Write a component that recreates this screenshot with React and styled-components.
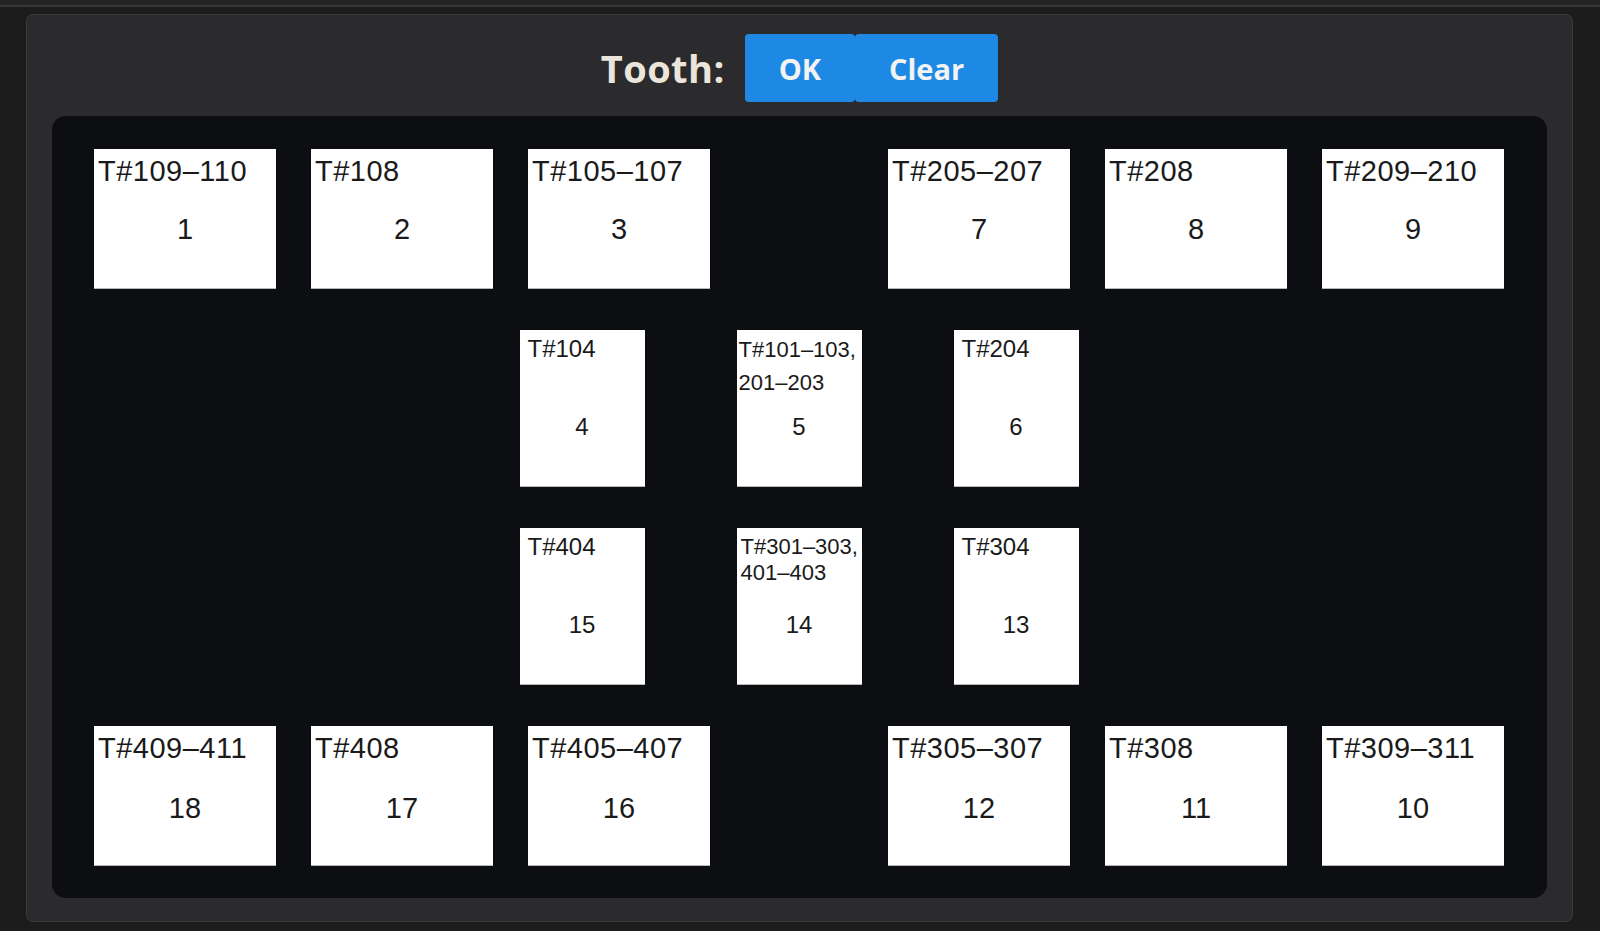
import React from 'react';
import styled, { createGlobalStyle } from 'styled-components';

const upperLeft = [
    { label: 'T#109\u2013110', num: 1 },
    { label: 'T#108', num: 2 },
    { label: 'T#105\u2013107', num: 3 },
]
const upperRight = [
    { label: 'T#205\u2013207', num: 7 },
    { label: 'T#208', num: 8 },
    { label: 'T#209\u2013210', num: 9 },
]
const upperMid = [
    { label: ['T#104'], num: 4 },
    { label: ['T#101\u2013103,', '201\u2013203'], num: 5, small: true, lh: 33, pt: 3, pl: 2 },
    { label: ['T#204'], num: 6 },
]
const lowerMid = [
    { label: ['T#404'], num: 15 },
    { label: ['T#301\u2013303,', '401\u2013403'], num: 14, small: true, lh: 26, pt: 6, pl: 4 },
    { label: ['T#304'], num: 13 },
]
const lowerLeft = [
    { label: 'T#409\u2013411', num: 18 },
    { label: 'T#408', num: 17 },
    { label: 'T#405\u2013407', num: 16 },
]
const lowerRight = [
    { label: 'T#305\u2013307', num: 12 },
    { label: 'T#308', num: 11 },
    { label: 'T#309\u2013311', num: 10 },
]

function WideTile({ item, low }) {
    return (
        <Tile $wide>
            <Label $wide $low={low}>{item.label}</Label>
            <Num $wide>{item.num}</Num>
        </Tile>
    )
}

function NarrowTile({ item }) {
    return (
        <Tile>
            <Label $small={item.small} $lh={item.lh} $pt={item.pt} $pl={item.pl}>
                {item.label.map((line) => <div key={line}>{line}</div>)}
            </Label>
            <Num>{item.num}</Num>
        </Tile>
    )
}

export default function App() {
    return (
        <>
            <GlobalStyle />
            <TopStrip />
            <Page>
                <Dialog>
                    <Header>
                        <Title>Tooth:</Title>
                        <ButtonGroup>
                            <Button>OK</Button>
                            <Button>Clear</Button>
                        </ButtonGroup>
                    </Header>
                    <Board>
                        <EdgeRow>
                            <Group>{upperLeft.map((t) => <WideTile key={t.num} item={t} />)}</Group>
                            <Group>{upperRight.map((t) => <WideTile key={t.num} item={t} />)}</Group>
                        </EdgeRow>
                        <MidRow>{upperMid.map((t) => <NarrowTile key={t.num} item={t} />)}</MidRow>
                        <MidRow>{lowerMid.map((t) => <NarrowTile key={t.num} item={t} />)}</MidRow>
                        <EdgeRow>
                            <Group>{lowerLeft.map((t) => <WideTile key={t.num} item={t} low />)}</Group>
                            <Group>{lowerRight.map((t) => <WideTile key={t.num} item={t} low />)}</Group>
                        </EdgeRow>
                    </Board>
                </Dialog>
            </Page>
        </>
    )
}

const blue = '#1e88e5',
    panelbg = '#2b2b2d',
    boardbg = '#0c0e11',
    tiletext = '#1a1a1a'

const GlobalStyle = createGlobalStyle`
    html, body {
        margin: 0;
        padding: 0;
        background: #1c1c1c;
        font-family: "Liberation Sans", Arial, sans-serif;
    }
`

const TopStrip = styled.div`
    height: 5px;
    background: #232323;
    border-bottom: 2px solid #373737;
`

const Page = styled.div`
    padding: 7px 27px 9px 26px;
`

const Dialog = styled.div`
    background: ${panelbg};
    border: 1px solid #3b3b3d;
    border-radius: 7px;
    padding: 19px 25px 23px 25px;
`

const Header = styled.div`
    display: flex;
    justify-content: center;
    align-items: center;
    gap: 20px;
    margin-bottom: 14px;
`

const Title = styled.span`
    font-family: "Open Sans", sans-serif;
    font-weight: 700;
    font-size: 38px;
    letter-spacing: 0.4px;
    color: #ebe5db;
    line-height: 1;
`

const ButtonGroup = styled.div`
    display: flex;
`

const Button = styled.button`
    height: 68px;
    padding: 0 34px;
    border: none;
    border-radius: 4px;
    background: ${blue};
    color: #f3f3f3;
    font-family: "Open Sans", sans-serif;
    font-weight: 700;
    font-size: 29px;
    cursor: pointer;
`

const Board = styled.div`
    background: ${boardbg};
    border-radius: 14px;
    padding: 33px 43px 32px 42px;
    display: flex;
    flex-direction: column;
    gap: 41px;
`

const EdgeRow = styled.div`
    display: flex;
    justify-content: space-between;
`

const Group = styled.div`
    display: flex;
    gap: 35px;
`

const MidRow = styled.div`
    display: flex;
    justify-content: center;
    gap: 92px;
`

const Tile = styled.div`
    width: ${(p) => (p.$wide ? '182px' : '125px')};
    height: ${(p) => (p.$wide ? '140px' : '157px')};
    background: #fff;
    box-shadow: inset 0 -1px 0 #b8b8b8;
    color: ${tiletext};
    display: flex;
    flex-direction: column;
    box-sizing: border-box;
`

const Label = styled.div`
    box-sizing: border-box;
    height: ${(p) => (p.$wide ? (p.$low ? '65px' : '63px') : '83px')};
    padding-top: ${(p) => (p.$pt != null ? p.$pt : 5)}px;
    padding-left: ${(p) => (p.$pl != null ? p.$pl : p.$wide ? 4 : 8)}px;
    font-size: ${(p) => (p.$wide ? '29px' : p.$small ? '22px' : '24px')};
    letter-spacing: ${(p) => (p.$wide ? '0.5px' : '0')};
    line-height: ${(p) => (p.$lh ? p.$lh + 'px' : p.$wide ? '34px' : '28px')};
    white-space: nowrap;
`

const Num = styled.div`
    text-align: center;
    font-size: ${(p) => (p.$wide ? '29px' : '24px')};
    line-height: ${(p) => (p.$wide ? '34px' : '28px')};
`
